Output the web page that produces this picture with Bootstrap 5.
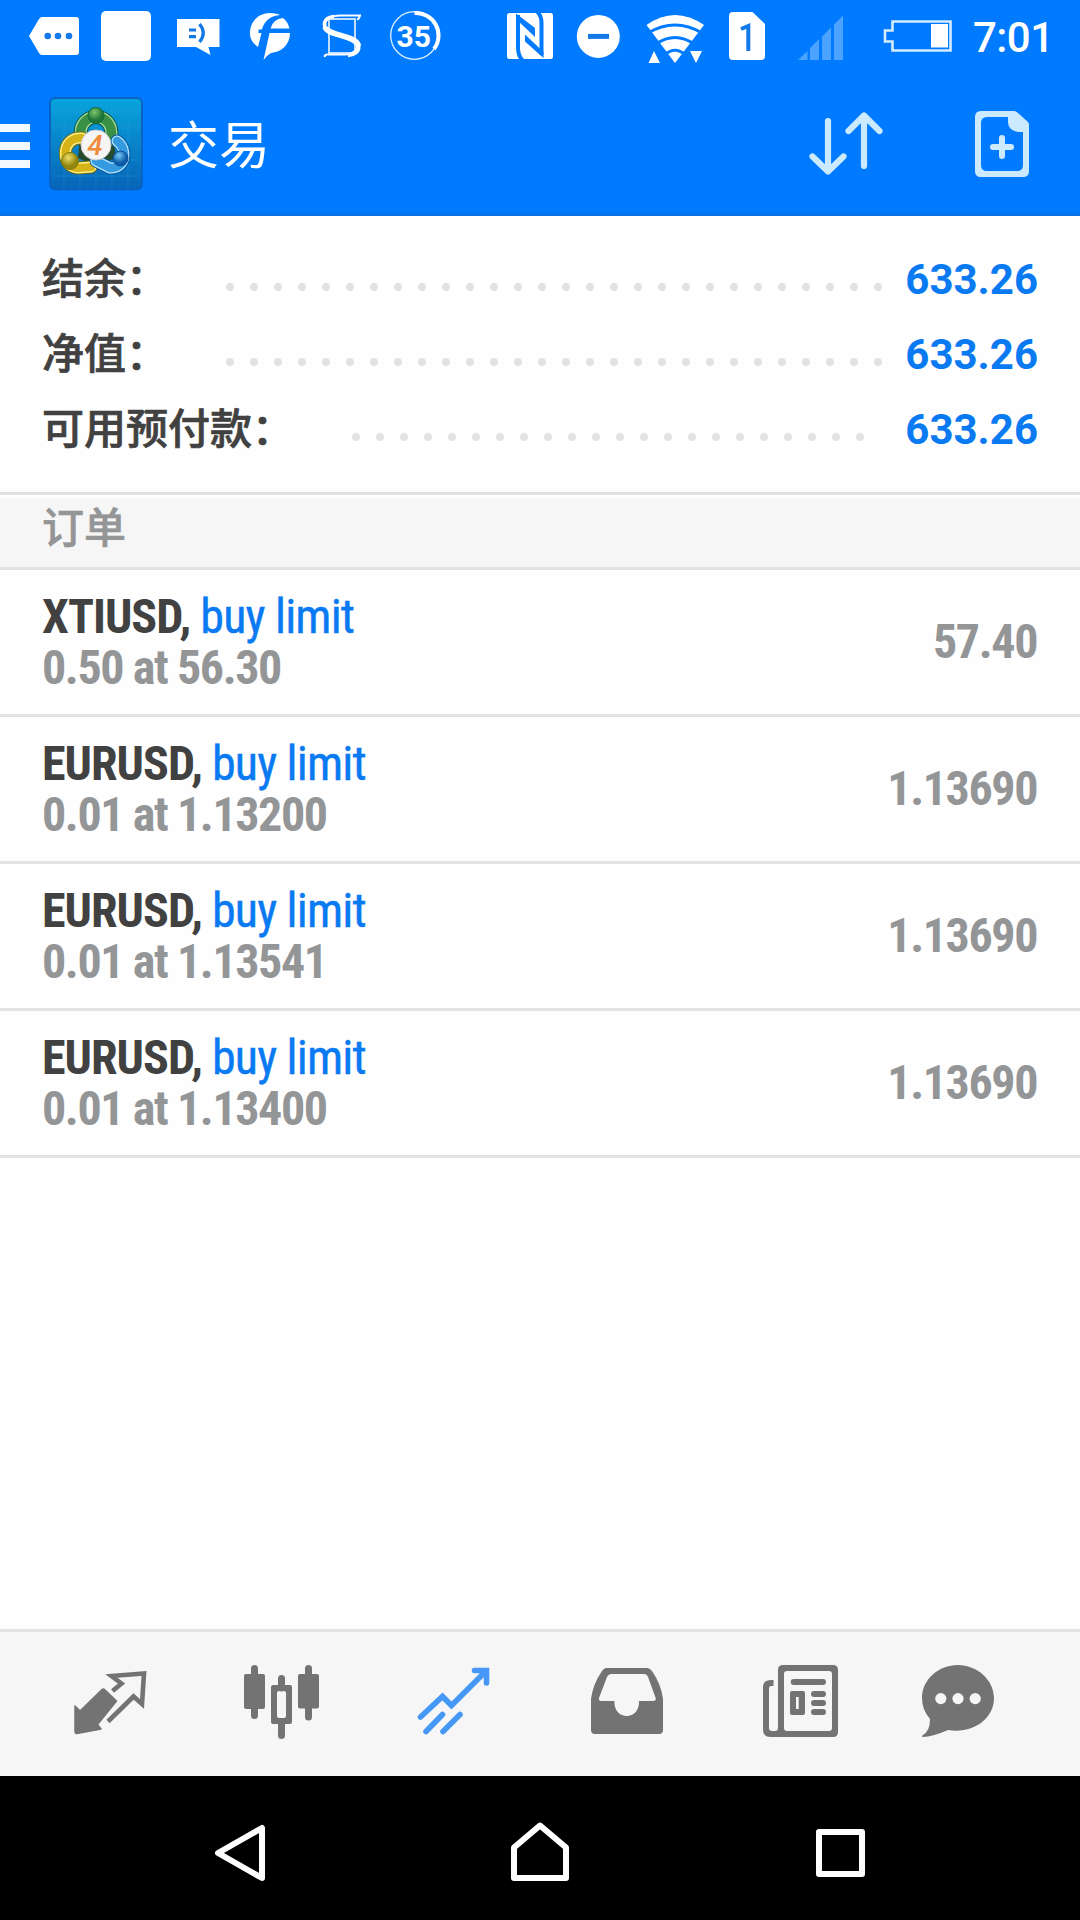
<!DOCTYPE html>
<html lang="zh-CN">
<head>
<meta charset="utf-8">
<meta name="viewport" content="width=device-width, initial-scale=1">
<title>交易</title>
<link href="https://cdn.jsdelivr.net/npm/bootstrap@5.3.0/dist/css/bootstrap.min.css" rel="stylesheet">
<style>
body{width:1080px;height:1920px;overflow:hidden;background:#fefefe;font-family:Roboto,"Noto Sans CJK SC",sans-serif;color:#414141}
svg{display:block;flex:none}
.status-strip{height:72px;background:#007aff}
.app-bar{height:144px;background:linear-gradient(#007aff 0 139px,#0b6fe0 144px)}
.app-title{font-size:51px;line-height:72px;width:640px;font-family:"Noto Sans CJK SC",sans-serif;padding-bottom:4px}
.summary{height:276px;padding:24px 42px 0}
.sum-row{height:75px;line-height:71px;font-size:42px}
.sum-label{font-family:"Noto Sans CJK SC",sans-serif;font-weight:500;-webkit-text-stroke:.7px;color:#414141;width:184px;white-space:nowrap;padding-bottom:4px}
.sum-label.wide{width:310px}
.dots{height:8px;margin-top:19px;width:672px;background:radial-gradient(circle at 4px 4px,#e2e2e2 3.6px,transparent 4.4px) 0 0/24px 8px}
.dots.short{width:528px}
.sum-value{color:#0a7af2;font-weight:700;padding-top:4px}
.section-head{height:78px;border-top:3px solid #e1e1e1;border-bottom:3px solid #e3e3e3;background:linear-gradient(#fff 0 2px,#f6f6f6 4px);padding:0 42px;font:500 42px/60px "Noto Sans CJK SC",sans-serif;color:#939597;-webkit-text-stroke:.6px}
.order{height:147px;border-bottom:3px solid #e3e3e3;padding:0 42px;font-size:48px;font-family:"Roboto Condensed",Roboto,sans-serif;font-stretch:75%}
.order-text{line-height:51px;letter-spacing:-.98px}
.sym{font-weight:700;color:#414141}
.kind{color:#0a7af2;letter-spacing:-.82px;-webkit-text-stroke:.4px}
.vol,.price{font-weight:700;color:#939597;letter-spacing:-1.4px}
.price{padding-right:1px}
.tabs{height:147px;border-top:3px solid #e3e3e3;background:#f6f6f6;color:#737373}
.sysnav{height:144px;background:#000}
</style>
</head>
<body class="d-flex flex-column">
<div class="status-strip d-flex">
<svg width="90" height="72" viewBox="0 0 90 72"><path fill="#fff" d="M29 36L39 19Q40.500 17 42 17H76Q79 17 79 20V52Q79 55 76 55H42Q40 55 39 53Z"/><g fill="#1479e8"><circle cx="47.700" cy="36" r="3.300"/><circle cx="58" cy="36" r="3.300"/><circle cx="69" cy="36" r="3.300"/></g></svg>
<svg width="74" height="72" viewBox="90 0 74 72"><rect x="101" y="11" width="50" height="50" rx="5" fill="#fff"/></svg>
<svg width="71" height="72" viewBox="164 0 71 72"><path fill="#fff" d="M177 19H219.500V47H208.500L210.500 55L196 47H177Z"/><path d="M189 30H196M189 36.700H196M199.500 24Q207 33 199.500 42" fill="none" stroke="#1479e8" stroke-width="3.200"/></svg>
<svg width="71" height="72" viewBox="235 0 71 72"><path fill="#fff" d="M270 13C275 13 278 14 280 15C267 16 263 25 262 29.500H258.500V33H261.500L258 47C252.500 43 250 39 250 33C250 21 259 13 270 13ZM283 18Q288 22 289.500 28.500H270.500Q273 19 283 18ZM269.500 33H290C290 45 281 52 271 53Q266 56 263.500 60Z"/></svg>
<svg width="69" height="72" viewBox="306 0 69 72"><path fill="none" stroke="#fff" stroke-width="1.500" d="M329 19H355V53H329Z"/><path d="M357 19.500C359 19 359.500 17.500 360 15.500H341C329 15.500 323.500 21 324 27C325 39 355 34 357 44C358 49 353 54.500 345 54.500H327Q325 54.500 324.500 57" fill="none" stroke="#fff" stroke-width="2"/><path d="M325 27C328 36 357 35 358.500 46" fill="none" stroke="#fff" stroke-width="5.500"/><path d="M325 27C323 21 327 17 334 16.500M358.500 45C360 52 354 55 348 55.500" fill="none" stroke="#fff" stroke-width="3.500"/></svg>
<svg width="119" height="72" viewBox="375 0 119 72"><circle cx="414.500" cy="35.500" r="23.800" fill="none" stroke="#d9f1ff" stroke-width="1.300"/><path d="M414.500 13A22.500 22.500 0 0 1 434 49" fill="none" stroke="#fff" stroke-width="4"/><text x="413.800" y="46.800" text-anchor="middle" font-family="Roboto" font-weight="700" font-size="30" fill="#fff">35</text></svg>
<svg width="76" height="72" viewBox="494 0 76 72"><rect x="507" y="13" width="46" height="46" rx="2.500" fill="#fff"/><path d="M518 15V48Q518 56 523 61M536.500 11Q541.500 15 541.500 23V55" fill="none" stroke="#007aff" stroke-width="4"/><path d="M516 13.500L535 28V37L516 19ZM525 34.500L543.500 52V58L525 41.500Z" fill="#007aff"/></svg>
<svg width="65" height="72" viewBox="570 0 65 72"><circle cx="598.300" cy="36.400" r="21.500" fill="#fff"/><path d="M588 36.400H609" stroke="#1479e8" stroke-width="5"/></svg>
<svg width="82" height="72" viewBox="635 0 82 72"><path d="M646.500 25Q675 5 704 25L675 63Z" fill="#fff"/><path d="M648 33Q675 17 702 33M656 44Q675 31 694 44M665 54.500Q675 46 685 54.500" fill="none" stroke="#007aff" stroke-width="3"/><path d="M648.500 63H660L654 51ZM690 51H702L696 63Z" fill="#fff"/></svg>
<svg width="69" height="72" viewBox="717 0 69 72"><path d="M733 12H752.500L765 24V56Q765 60 761 60H733Q729 60 729 56V16Q729 12 733 12Z" fill="#fff"/><path d="M741 29L748.300 26V51" fill="none" stroke="#1479e8" stroke-width="4"/></svg>
<svg width="78" height="72" viewBox="786 0 78 72"><path d="M798 60L807.500 51V60ZM810 48L819 39V60H810ZM822 36.500L831 27.500V60H822ZM834 24.500L843 15.500V60H834Z" fill="#4ba3ff"/></svg>
<svg width="106" height="72" viewBox="864 0 106 72"><path d="M892.500 21.500H950.500V50.500H892.500V41.500H885V30.500H892.500Z" fill="none" stroke="#d4ecff" stroke-width="2.600"/><path fill="#fff" d="M931 24H948V47.500H931Z"/></svg>
<svg width="110" height="72" viewBox="970 0 110 72"><text x="973" y="52" font-family="Roboto" font-weight="500" font-size="42" textLength="81" fill="#fff">7:01</text></svg>
</div>
<header class="app-bar d-flex text-white">
<svg width="168" height="144" viewBox="0 72 168 144">
<defs><linearGradient id="lb" x1="0" y1="0" x2="0" y2="1"><stop stop-color="#08a4dc"/><stop offset="1" stop-color="#0864b8"/></linearGradient>
<radialGradient id="lg" cx=".4" cy=".3"><stop stop-color="#7cc76c"/><stop offset="1" stop-color="#1f7638"/></radialGradient>
<radialGradient id="ly" cx=".4" cy=".3"><stop stop-color="#eee066"/><stop offset="1" stop-color="#93860f"/></radialGradient>
<radialGradient id="lc" cx=".4" cy=".3"><stop stop-color="#75c9f6"/><stop offset="1" stop-color="#0c5ca8"/></radialGradient></defs>
<path d="M0 124H30V132H0ZM0 142H30V150H0ZM0 160H30V168H0Z" fill="#f2faff"/>
<rect x="50" y="98" width="92" height="91.500" rx="5" fill="url(#lb)" stroke="#0863c2" stroke-width="2"/>
<path d="M64 100V188M80 100V188M96 100V188M112 100V188M128 100V188M52 112H140M52 128H140M52 160H140M52 176H140" stroke="#35b5e5" stroke-width=".6" opacity=".35"/>
<path d="M80 136H113L116 158L96 166L78 158Z" fill="#234b2c"/>
<g fill="none" stroke-linecap="round"><path d="M81 138C76 110 116 110 111 138" stroke="#08513a" stroke-width="14"/><path d="M81 138C76 110 116 110 111 138" stroke="#a8dda0" stroke-width="12"/><path d="M81 138C76 110 116 110 111 138" stroke="#3a9145" stroke-width="9.500"/>
<path d="M82 138C61 136 60 167 78 168L91 167" stroke="#796c08" stroke-width="13"/><path d="M82 138C61 136 60 167 78 168L91 167" stroke="#fff28a" stroke-width="11"/><path d="M82 138C61 136 60 167 78 168L91 167" stroke="#d6b316" stroke-width="8"/>
<path d="M117 141C129 150 125 169 110 168L96 161" stroke="#07569e" stroke-width="13"/><path d="M117 141C129 150 125 169 110 168L96 161" stroke="#b2e6ff" stroke-width="11"/><path d="M117 141C129 150 125 169 110 168L96 161" stroke="#3499de" stroke-width="8.500"/></g>
<circle cx="96" cy="115.500" r="8" fill="url(#lg)" stroke="#126739"/><circle cx="70" cy="161" r="8.500" fill="url(#ly)" stroke="#81780b"/><circle cx="120.500" cy="158.500" r="7.500" fill="url(#lc)" stroke="#084d93"/>
<circle cx="96" cy="145" r="15" fill="#f6f5f6" stroke="#d2cccb"/><text x="95" y="154.500" text-anchor="middle" font-family="Roboto" font-style="italic" font-weight="500" font-size="28" fill="#ee8a38">4</text>
</svg>
<div class="app-title align-self-center">交易</div>
<svg width="110" height="144" viewBox="808 72 110 144"><path d="M828 121V171M812.500 156.500L828 171.500L843.500 156.500M864 166V116M848.500 131L864 115.500L879.500 131" fill="none" stroke="#cbeaff" stroke-width="6.200" stroke-linecap="round" stroke-linejoin="round"/></svg>
<svg width="162" height="144" viewBox="918 72 162 144"><path fill="#cbeaff" fill-rule="evenodd" d="M981 111H1014Q1016 111 1018 113L1028 122Q1029 123.500 1029 125V171Q1029 177 1023 177H981Q975 177 975 171V117Q975 111 981 111ZM987 117Q981 117 981 123V165Q981 171 987 171H1017Q1023 171 1023 165V132H1018Q1008 130 1008 122V117Z"/><path d="M1002 138V156M993 147H1011" stroke="#cbeaff" stroke-width="6" stroke-linecap="round"/></svg>
</header>
<section class="summary">
<div class="sum-row d-flex align-items-center"><span class="sum-label">结余：</span><span class="dots"></span><span class="sum-value ms-auto">633.26</span></div>
<div class="sum-row d-flex align-items-center"><span class="sum-label">净值：</span><span class="dots"></span><span class="sum-value ms-auto">633.26</span></div>
<div class="sum-row d-flex align-items-center"><span class="sum-label wide">可用预付款：</span><span class="dots short"></span><span class="sum-value ms-auto">633.26</span></div>
</section>
<div class="section-head">订单</div>
<main class="flex-grow-1">
<div class="order d-flex align-items-center justify-content-between"><div class="order-text"><div><span class="sym">XTIUSD,</span> <span class="kind">buy limit</span></div><div class="vol">0.50 at 56.30</div></div><div class="price">57.40</div></div>
<div class="order d-flex align-items-center justify-content-between"><div class="order-text"><div><span class="sym">EURUSD,</span> <span class="kind">buy limit</span></div><div class="vol">0.01 at 1.13200</div></div><div class="price">1.13690</div></div>
<div class="order d-flex align-items-center justify-content-between"><div class="order-text"><div><span class="sym">EURUSD,</span> <span class="kind">buy limit</span></div><div class="vol">0.01 at 1.13541</div></div><div class="price">1.13690</div></div>
<div class="order d-flex align-items-center justify-content-between"><div class="order-text"><div><span class="sym">EURUSD,</span> <span class="kind">buy limit</span></div><div class="vol">0.01 at 1.13400</div></div><div class="price">1.13690</div></div>
</main>
<nav class="tabs d-flex">
<svg width="190" height="144" viewBox="0 1632 190 144"><path d="M75 1706L80 1711L102 1689.500Q103.500 1688.500 105 1690L116.500 1701L97.500 1724.500L101 1729L77 1733.500Q75 1733.500 75 1731Z" fill="currentColor" stroke="currentColor" stroke-width="1.500" stroke-linejoin="round"/><path d="M112.500 1691L121.500 1683.500L111.500 1676L144 1673.500L142 1704L133.500 1696.500L108 1721.500" fill="none" stroke="currentColor" stroke-width="4.600"/></svg>
<svg width="180" height="144" viewBox="190 1632 180 144"><g fill="none" stroke="currentColor" stroke-width="7" stroke-linecap="round"><path d="M254.500 1668.500V1715.500M281.500 1678.500V1688M281.500 1724V1735.500M308.500 1668.500V1717"/></g><g fill="currentColor"><rect x="244" y="1674" width="21" height="35" rx="2"/><rect x="298" y="1674" width="21" height="34.500" rx="2"/><path fill-rule="evenodd" d="M273 1685H290Q292 1685 292 1687V1722Q292 1724 290 1724H273Q271 1724 271 1722V1687Q271 1685 273 1685ZM279 1691Q277 1691 277 1693V1716Q277 1718 279 1718H284Q286 1718 286 1716V1693Q286 1691 284 1691Z"/></g></svg>
<svg width="170" height="144" viewBox="370 1632 170 144"><path d="M420.500 1717L442.500 1696.500L451.500 1705.500L486 1671M474.500 1670.500H486.500V1683M426 1731.500L442.500 1714.500M443 1731.500L460 1714.500" fill="none" stroke="#4598f5" stroke-width="5.600" stroke-linecap="round" stroke-linejoin="miter"/></svg>
<svg width="173" height="144" viewBox="540 1632 173 144"><path fill="currentColor" fill-rule="evenodd" d="M606 1668H647Q650 1668 652 1671Q661 1684 663 1699V1730Q663 1734 659 1734H595Q591 1734 591 1730V1699Q593 1684 602 1671Q604 1668 606 1668ZM611 1674Q608.500 1674 607 1677L599 1698Q598.500 1701 601 1701H614.400C613.500 1721 640 1721 639 1701H653Q656.500 1701 655.700 1698L648 1677Q647 1674 644 1674Z"/></svg>
<svg width="170" height="144" viewBox="713 1632 170 144"><path fill="currentColor" fill-rule="evenodd" d="M783 1665H833Q838 1665 838 1670V1732Q838 1737 833 1737H770Q763 1737 763 1729V1687Q763 1680 771 1680H773.500V1686H771Q769 1686 769 1689V1728Q769 1731 772 1731H775Q778 1731 778 1728V1670Q778 1665 783 1665ZM787 1671Q784 1671 784 1674V1728Q784 1731 787 1731H829Q832 1731 832 1728V1674Q832 1671 829 1671Z"/><path fill="currentColor" fill-rule="evenodd" d="M792 1691H803Q805 1691 805 1693V1713Q805 1715 803 1715H792Q790 1715 790 1713V1693Q790 1691 792 1691ZM796 1697V1709H798.700V1697Z"/><path d="M793.700 1682H823M814 1694H823M814 1703H823M814 1712H823" stroke="currentColor" stroke-width="6" stroke-linecap="round"/></svg>
<svg width="197" height="144" viewBox="883 1632 197 144"><path fill="currentColor" d="M958 1665C977 1665 994 1680 994 1698C994 1719 973 1734 948 1730Q932 1737 923 1737Q921 1736.500 923 1735Q930 1731 930 1719Q922 1710 922 1698C922 1679 939 1665 958 1665Z"/><g fill="#f6f6f6"><circle cx="940.800" cy="1698.600" r="5.600"/><circle cx="958" cy="1698.600" r="5.600"/><circle cx="975.200" cy="1698.600" r="5.600"/></g></svg>
</nav>
<div class="sysnav d-flex">
<svg width="390" height="144" viewBox="0 1776 390 144"><path d="M218 1853L262 1828V1878Z" fill="none" stroke="#fff" stroke-width="6" stroke-linejoin="round"/></svg>
<svg width="300" height="144" viewBox="390 1776 300 144"><path d="M514 1878V1847.500L540 1825.500L566 1847.500V1878Z" fill="none" stroke="#fff" stroke-width="6" stroke-linejoin="round"/></svg>
<svg width="390" height="144" viewBox="690 1776 390 144"><rect x="819" y="1832" width="43" height="42" fill="none" stroke="#fff" stroke-width="6" stroke-linejoin="round"/></svg>
</div>
<script src="https://cdn.jsdelivr.net/npm/bootstrap@5.3.0/dist/js/bootstrap.bundle.min.js"></script>
</body>
</html>
